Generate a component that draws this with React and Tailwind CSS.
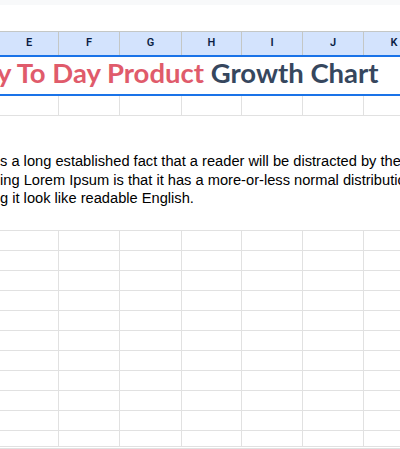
import React from "react";

const widths = ["w-[59px]", "w-[61px]", "w-[62px]", "w-[60px]", "w-[61px]", "w-[61px]", "w-[61px]"];
const labels = ["E", "F", "G", "H", "I", "J", "K"];

function GridRow({ h }) {
  return (
    <div className={`flex shrink-0 border-b border-[#e1e1e1] ${h}`}>
      {widths.map((w, i) => (
        <div key={i} className={`${w} shrink-0 h-full border-r border-[#e1e1e1]`} />
      ))}
    </div>
  );
}

export default function App() {
  const rows = Array.from({ length: 10 });
  return (
    <div className="w-[400px] h-[449px] overflow-hidden bg-white flex flex-col">
      <div className="h-[5px] shrink-0 bg-[#f8f9fa]" />
      <div className="h-[26px] shrink-0 bg-white" />
      {/* column header */}
      <div className="h-[24px] shrink-0 flex border-t border-[#c4c7c5] bg-[#d3e3fd]">
        {widths.map((w, i) => (
          <div
            key={i}
            className={`${w} shrink-0 h-full border-r border-[#c4c7c5] flex items-center justify-center text-[11px] font-semibold text-[#0b1e45] font-['Roboto',sans-serif]`}
          >
            {labels[i]}
          </div>
        ))}
      </div>
      {/* title row */}
      <div className="h-[41px] shrink-0 border-t-2 border-b-2 border-[#1a73e8] overflow-hidden">
        <div className="whitespace-nowrap ml-[-3px] text-[27.5px] leading-[32px] font-bold font-['Lato',sans-serif]">
          <span className="text-[#e05b6b]">y To Day Product </span>
          <span className="text-[#36475e]">Growth Chart</span>
        </div>
      </div>
      <GridRow h="h-[20px]" />
      {/* text block */}
      <div className="h-[115px] shrink-0 border-b border-[#e1e1e1] pt-[36px] overflow-hidden text-[14.67px] leading-[18.5px] text-black font-['Liberation_Sans',Arial,sans-serif] whitespace-nowrap">
        <div>s a long established fact that a reader will be distracted by the readable content</div>
        <div>ing Lorem Ipsum is that it has a more-or-less normal distribution of letters</div>
        <div>g it look like readable English.</div>
      </div>
      {rows.map((_, i) => (
        <GridRow key={i} h="h-[20px]" />
      ))}
      <GridRow h="h-[16px]" />
      <div className="h-[1px] shrink-0 bg-white" />
      <div className="h-[1px] shrink-0 bg-[#e1e1e1]" />
    </div>
  );
}
